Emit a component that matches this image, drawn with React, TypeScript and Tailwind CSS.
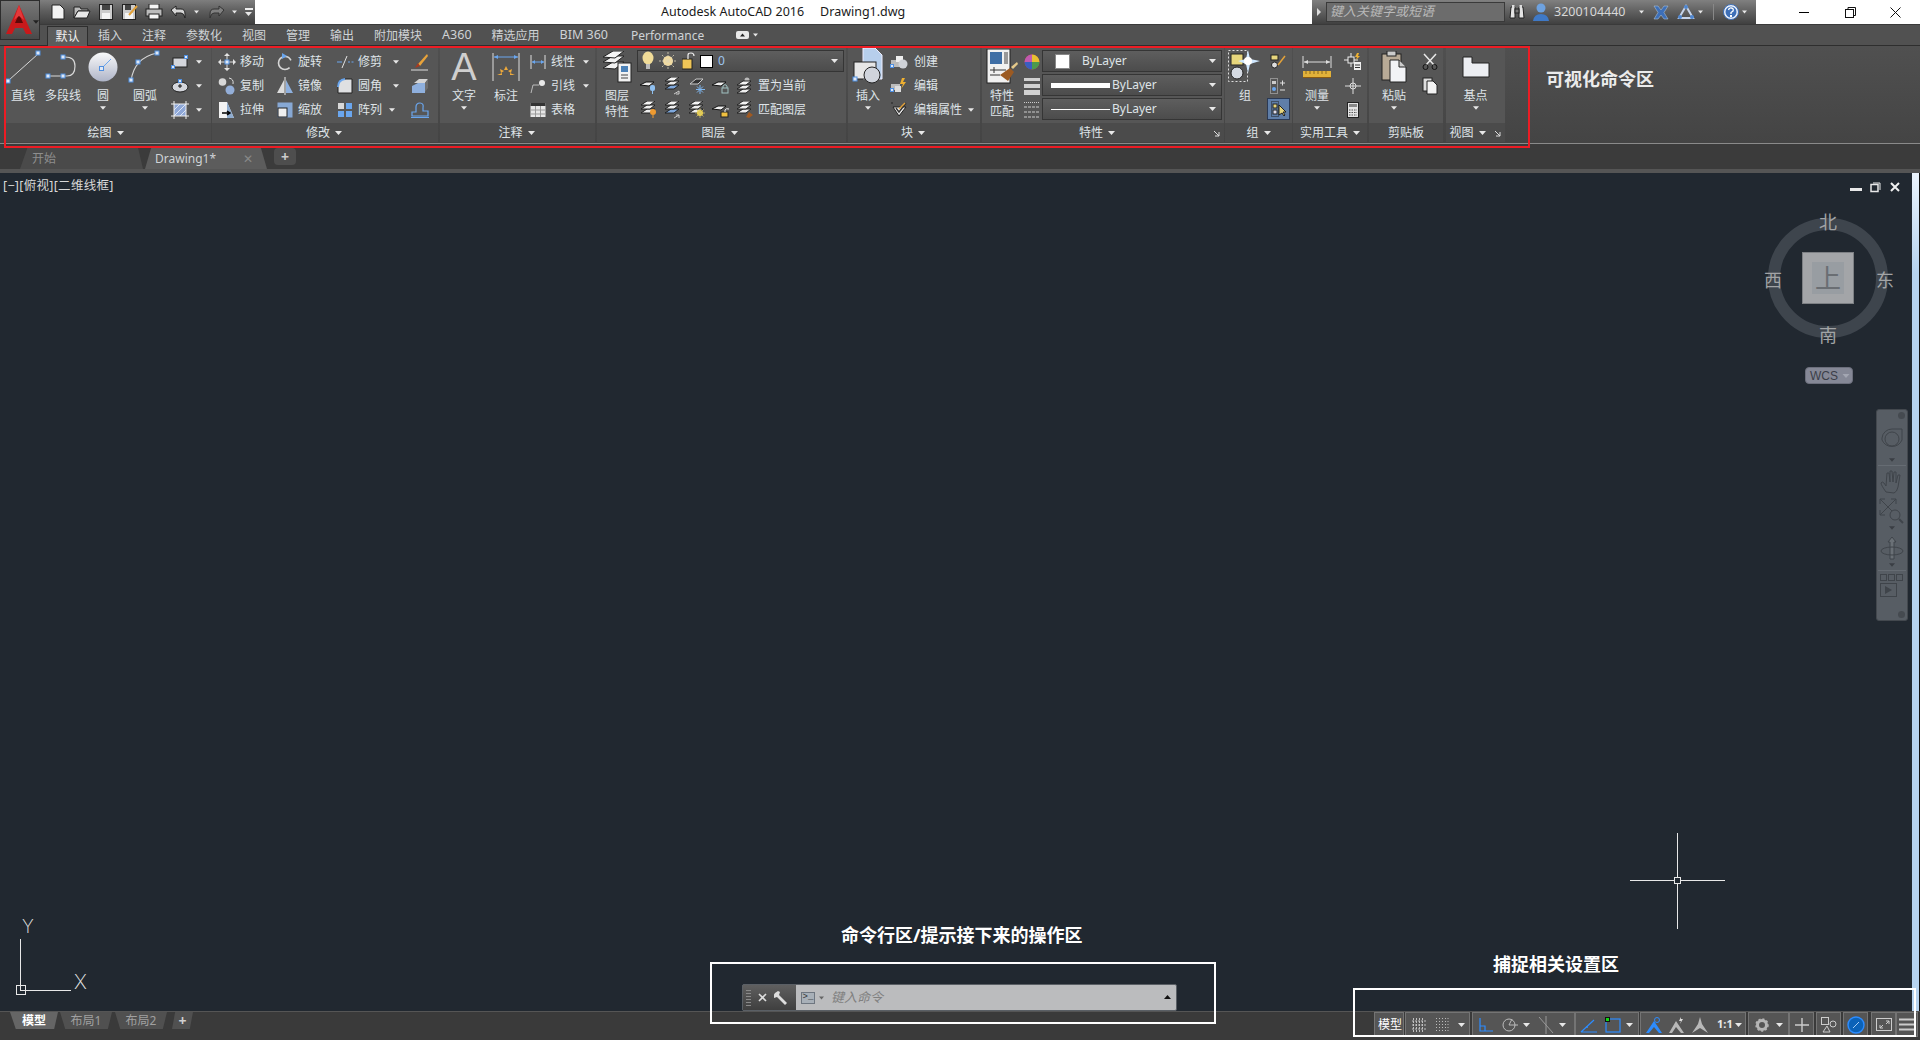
import React from "react";

const S = ({ w, h, children }: { w: number; h: number; children?: React.ReactNode }) => (
  <svg width={w} height={h} viewBox={`0 0 ${w} ${h}`} fill="none" className="shrink-0 block">{children}</svg>
);
const BL = "#6aa6ee";
const Hd = ({ x, y, s = 4 }: { x: number; y: number; s?: number }) => (
  <rect x={x - s / 2} y={y - s / 2} width={s} height={s} fill="#dfe8f5" stroke="#4f8fe0" />
);
const Caret = ({ up, c = "#e8e8e8", w = 7 }: { up?: boolean; c?: string; w?: number }) => (
  <svg width={w} height={4} viewBox="0 0 7 4" className="shrink-0 block">
    <path d={up ? "M0 4 L3.5 0 L7 4Z" : "M0 0 L7 0 L3.5 4Z"} fill={c} />
  </svg>
);

/* Draw */
const ILine = () => <S w={36} h={34}><path d="M4 30 L33 4" stroke="#d8d8d8" /><Hd x={3} y={31} /><Hd x={33} y={3} /></S>;
const IPoly = () => <S w={36} h={26}><path d="M3 22 H22 Q30 22 30 12 Q30 3 20 3" stroke="#d8d8d8" strokeWidth="1.2" /><Hd x={3} y={22} /><Hd x={18} y={22} /><Hd x={18} y={3} /></S>;
const ICircle = () => (
  <S w={30} h={30}>
    <defs><linearGradient id="cg" x1="0" y1="0" x2="0" y2="1"><stop offset="0" stopColor="#fafafa" /><stop offset="1" stopColor="#aeb4c8" /></linearGradient></defs>
    <circle cx="15" cy="15" r="14.5" fill="url(#cg)" /><path d="M14 16 L23 7" stroke={BL} /><Hd x={13.5} y={16.5} />
  </S>
);
const IArc = () => <S w={34} h={34}><path d="M3 31 Q6 8 29 3" stroke="#d8d8d8" strokeWidth="1.2" /><Hd x={3} y={30} /><Hd x={10} y={12} /><Hd x={29} y={3} /></S>;
const IRect = () => <S w={18} h={14}><rect x="2" y="3" width="14" height="9" fill="#d4d6dc" stroke="#222" /><Hd x={2} y={12} s={3} /><Hd x={15} y={2} s={3} /></S>;
const IEllipse = () => <S w={18} h={14}><ellipse cx="9" cy="8" rx="8" ry="5" fill="#d4d6dc" stroke="#222" /><path d="M7 7h4M9 5v4" stroke="#111" /><Hd x={9} y={2} s={3} /></S>;
const IHatch = () => (
  <S w={18} h={18}><rect x="3" y="3" width="12" height="12" fill="#8fa8d8" /><path d="M3 9 L9 3M3 15 L15 3M9 15 L15 9" stroke="#dce6f5" /><path d="M0 3H18M0 15H18M3 0V18M15 0V18" stroke="#f0f0f0" /></S>
);
/* Modify */
const IMove = () => <S w={18} h={18}><path d="M9 1v16M1 9h16" stroke="#ddd" /><path d="M9 0l3 3H6zM9 18l3-3H6zM0 9l3-3v6zM18 9l-3-3v6z" fill="#e4e4e4" /><Hd x={9} y={9} s={4} /></S>;
const IRotate = () => <S w={18} h={18}><circle cx="9" cy="10" r="6.5" stroke="#d6d6d6" strokeWidth="1.6" strokeDasharray="32 8" strokeDashoffset="-5" /><path d="M6 0l5 3-5 3z" fill={BL} /></S>;
const ITrim = () => <S w={18} h={14}><path d="M1 7h5M12 7h2M15.5 7h2" stroke={BL} /><path d="M6 13L11 1" stroke="#e4e4e4" /></S>;
const ICopy = () => <S w={18} h={18}><circle cx="4.5" cy="5" r="3.8" fill="#d8d8d8" /><circle cx="12" cy="13" r="4.5" fill="#93aed8" /><path d="M11 1q5 1 4 6" stroke="#ddd" /></S>;
const IMirror = () => <S w={18} h={18}><path d="M8 3L1 16h7z" fill="#dcdcdc" /><path d="M10 3l7 13h-7z" fill="#8eb0de" /><path d="M9 0v18" stroke="#eee" /></S>;
const IFillet = () => <S w={16} h={16}><path d="M1 15V7Q1 1 9 1h6v14z" fill="#dfe0e2" stroke="#222" /><path d="M1 9Q1 2 8 1" stroke={BL} strokeWidth="2" /></S>;
const IStretch = () => <S w={18} h={18}><path d="M1 1h8l7 16H1z" fill="#f2f2f2" /><path d="M9 1l7 16H9z" fill="#8faccf" /><path d="M4 12h8m-3-2l3 2-3 2" stroke="#000" strokeWidth="1.5" /></S>;
const IScale = () => <S w={16} h={16}><rect x="0.5" y="0.5" width="15" height="15" fill="#87a8d4" /><rect x="1" y="6" width="9" height="9" fill="#efefef" stroke="#222" /></S>;
const IArray = () => <S w={16} h={16}><rect x="1" y="1" width="6" height="6" fill="#d8d8d8" /><rect x="9" y="1" width="6" height="6" fill={BL} /><rect x="1" y="9" width="6" height="6" fill={BL} /><rect x="9" y="9" width="6" height="6" fill={BL} /></S>;
const IBrush = () => <S w={18} h={18}><path d="M16 1L7 11l2 2L17 3z" fill="#e8a33a" /><path d="M7 10l-3 5 5-2z" fill="#a83a20" /><path d="M0 17h17" stroke="#ddd" /></S>;
const ISolid = () => <S w={18} h={16}><path d="M1 8l6-3v10H1zM7 5h7v10H7z" fill="#8fb0de" /><path d="M3 5l5-4h9l-3 4z" fill="#d4d4d4" /><path d="M14 5l3-4v9l-3 4z" fill="#6e6e6e" /></S>;
const IOffset = () => <S w={18} h={16}><path d="M1 14v-4h4V5q0-4 4-4t3 5v3h5v5z" stroke={BL} strokeWidth="1.2" /><path d="M0 15.5h18" stroke={BL} /></S>;
/* Annotate */
const IDim = () => (
  <S w={28} h={30}><path d="M1 1v28M27 1v28" stroke="#ddd" /><path d="M2 5h24" stroke={BL} /><path d="M2 5l4-2v4zM26 5l-4-2v4z" fill={BL} />
    <path d="M14 14l2 4h-4zM8 17l4 2-3 2zM20 17l-4 2 3 2zM5 23h5v-2zM23 23h-5v-2z" fill="#eda93b" /></S>
);
const ILinear = () => <S w={16} h={14}><path d="M1 0v14M15 0v14" stroke="#ddd" /><path d="M2 7h12" stroke={BL} /><path d="M2 7l3-2v4zM14 7l-3-2v4z" fill={BL} /></S>;
const ILeader = () => <S w={16} h={16}><path d="M1 15L3 7h6" stroke="#bbb" /><circle cx="12" cy="5" r="3" fill="#e8e8e8" /></S>;
const ITable = () => <S w={16} h={16}><rect x="0.5" y="1" width="15" height="14" fill="#e6e6e6" /><rect x="0.5" y="1" width="15" height="3" fill="#333" /><path d="M1 8h14M1 12h14M5.5 4v11M10.5 4v11" stroke="#999" /></S>;
/* Layers */
const ILayerP = () => (
  <S w={30} h={32}><path d="M1 17l10-6h11l-9 7z" fill="#f1f1f1" stroke="#222" /><path d="M1 11L11 5h11l-9 7z" fill="#f1f1f1" stroke="#222" /><path d="M1 6L11 0h11l-9 7z" fill="#f6f6f6" stroke="#222" />
    <rect x="16" y="12" width="13" height="19" fill="#f2f2f2" stroke="#222" /><rect x="19" y="15" width="7" height="6" fill="#4c82b8" /><path d="M19 24h7M19 27h7" stroke="#444" /></S>
);
const Stack = ({ base = "#eee" }: { base?: string }) => (
  <g><path d="M2 12l6-4h8l-5 4z" fill={base} stroke="#222" /><path d="M2 8l6-4h8l-5 4z" fill="#eee" stroke="#222" /><path d="M2 4l6-4h8l-5 4z" fill="#f4f4f4" stroke="#222" /></g>
);
const Sheet = () => <path d="M1 8l6-3h8l-5 4z" fill="#eee" stroke="#111" />;
const LA = () => <S w={20} h={18}><Sheet /><rect x="11" y="8" width="5" height="6" rx="2" fill="#8fc0f0" /><path d="M13.5 14v3" stroke="#8fc0f0" /></S>;
const LB = () => <S w={20} h={18}><Stack base="#7fa8dc" /><path d="M11 17l5-3M16 14v3h-3" stroke="#ccc" /></S>;
const LC = () => <S w={20} h={18}><path d="M3 7l6-5h7l-5 5z" fill="#333" stroke="#ccc" /><path d="M13 8v9M9 12.5h9M10 9.5l6 6M16 9.5l-6 6" stroke="#7fb6ee" /></S>;
const LD = () => <S w={20} h={18}><Sheet /><rect x="11" y="11" width="6" height="5" fill="none" stroke="#9fc0c0" /><path d="M12 11V9q2-3 4 0v2" stroke="#9fc0c0" /></S>;
const LE = () => <S w={20} h={18}><circle cx="12" cy="3" r="2.5" fill="#bbb" /><g transform="translate(0 4)"><Stack /></g></S>;
const LF = () => <S w={20} h={18}><Stack /><circle cx="14" cy="11" r="3" fill="#ee9a30" /><path d="M14 14v3" stroke="#ee9a30" /></S>;
const LG = () => <S w={20} h={18}><Stack base="#7fa8dc" /><path d="M11 17l5-3M16 14h-3M16 14v3" stroke="#ccc" /></S>;
const LH = () => <S w={20} h={18}><Stack /><circle cx="13" cy="12" r="3" fill="#efd040" /><path d="M13 7v10M8 12h10M9.5 8.5l7 7M16.5 8.5l-7 7" stroke="#d8c870" strokeWidth=".7" /></S>;
const LI = () => <S w={20} h={18}><Sheet /><rect x="10" y="11" width="7" height="5" fill="#efc040" stroke="#222" /><path d="M14 11V9q1-2 4-1" stroke="#eee" /></S>;
const LJ = () => <S w={20} h={18}><Stack /><path d="M11 16l3-5 4 3-4 3z" fill="#a05a22" /></S>;
const IBulb = () => <S w={12} h={20}><ellipse cx="6" cy="7" rx="5.5" ry="6.5" fill="#f1dc98" /><rect x="4" y="13" width="4" height="5" fill="#bbb" /></S>;
const ISun = () => <S w={20} h={20}><circle cx="10" cy="10" r="5" fill="#f3dca0" /><path d="M10 1v18M1 10h18M4 4l12 12M16 4L4 16" stroke="#dcd4b8" strokeWidth=".8" strokeDasharray="2 1" /></S>;
const ILock = () => <S w={14} h={18}><rect x="0" y="7" width="10" height="10" fill="#efc557" stroke="#222" /><path d="M6 7V3q0-2 3-2t3 3" stroke="#eee" strokeWidth="1.2" /></S>;
/* Block */
const IInsert = () => (
  <S w={32} h={40}><path d="M11 1h12l7 7v24H11z" fill="#b7cfec" stroke="#eef" /><rect x="2" y="15" width="22" height="17" fill="#e6e6e6" stroke="#222" /><circle cx="20" cy="28" r="8" fill="#d0d4dc" stroke="#222" /><Hd x={3} y={32} /></S>
);
const ICreate = () => <S w={18} h={14}><rect x="1" y="5" width="9" height="7" fill="#bbb" /><rect x="6" y="1" width="7" height="6" fill="#eee" /><circle cx="13" cy="9" r="4.5" fill="#cfd2d8" /><Hd x={2} y={11} s={3} /></S>;
const IEdit = () => <S w={18} h={16}><rect x="1" y="6" width="9" height="6" fill="#bbb" /><rect x="5" y="8" width="6" height="6" fill="#ddd" /><path d="M12 0l-2 6h3l-2 5 5-7h-3l2-4z" fill="#eeb030" /><Hd x={2} y={12} s={3} /></S>;
const IEditAttr = () => <S w={18} h={16}><path d="M1 1h2M3 5l6 9 7-9z" fill="#e8e8e8" stroke="#222" /><path d="M6 6l3 4 7-9" stroke="#333" strokeWidth="1.4" /><path d="M9 7l6-6" stroke="#e3a23a" strokeWidth="1.4" /></S>;
/* Properties */
const IMatch = () => (
  <S w={32} h={36}><rect x="1" y="0" width="23" height="34" fill="#f1f1f1" stroke="#222" /><rect x="4" y="3" width="12" height="12" fill="#3e6ea5" /><rect x="18" y="3" width="4" height="12" fill="#999" /><path d="M4 21h16M4 26h10M8 18v6" stroke="#333" /><path d="M14 26l10-7 4 4-6 9z" fill="#9c5a22" /><path d="M25 18l6-5 1 2-5 5z" fill="#e5c98a" /></S>
);
const IColor = () => <S w={16} h={16}><circle cx="8" cy="8" r="7.5" fill="#c44" /><path d="M8 8L8 .5A7.5 7.5 0 0 1 15.5 8z" fill="#e8c030" /><path d="M8 8h7.5A7.5 7.5 0 0 1 8 15.5z" fill="#4c9a4c" /><path d="M8 8v7.5A7.5 7.5 0 0 1 .5 8z" fill="#3a5ec0" /><path d="M8 8H.5A7.5 7.5 0 0 1 8 .5z" fill="#c05ab0" /></S>;
const ILW = () => <S w={16} h={18}><rect y="1" width="16" height="3" fill="#d0d0d0" /><rect y="7" width="16" height="4" fill="#d0d0d0" /><rect y="13" width="16" height="5" fill="#d0d0d0" /></S>;
const ILT = () => <S w={16} h={18}><path d="M0 1.5h16" stroke="#ccc" strokeDasharray="1 1" /><path d="M0 6h16M0 11h16M0 16h16" stroke="#ccc" strokeDasharray="3 1" /></S>;
/* Group */
const IGroup = () => (
  <S w={34} h={34}><rect x=".5" y=".5" width="19" height="31" stroke="#ddd" strokeDasharray="2 2" /><rect x="3" y="4" width="12" height="11" fill="#e7d67c" stroke="#222" /><circle cx="9" cy="23" r="6" fill="#d5dae2" stroke="#222" />
    <path d="M20 0l2 9 10 2-10 3-2 9-2-9-8-3 8-2z" fill="#cfe8ff" /><circle cx="20" cy="11" r="4" fill="#fff" /></S>
);
const IG1 = () => <S w={16} h={16}><rect x="1" y="1" width="7" height="5" fill="#e7d67c" stroke="#222" /><circle cx="4.5" cy="11" r="3" fill="#ddd" stroke="#222" /><path d="M8 11l7-9" stroke="#e3a23a" strokeWidth="1.5" /></S>;
const IG2 = () => <S w={16} h={16}><rect x=".5" y=".5" width="7" height="15" stroke="#ccc" strokeDasharray="1 1" /><rect x="2" y="3" width="4" height="3" fill="#ccc" /><circle cx="4" cy="11" r="2" fill={BL} /><path d="M10 5h5M12.5 2.5v5M10 12h5" stroke="#ddd" /></S>;
const IG3 = () => <S w={16} h={16}><rect x=".5" y=".5" width="7" height="15" stroke="#222" strokeDasharray="1 1" /><rect x="2" y="3" width="4" height="4" fill="#e7d67c" stroke="#222" /><rect x="2" y="9" width="4" height="4" fill="#dde" stroke="#222" /><path d="M8 4v10l3-2 2 3 1-1-2-3h3z" fill="#e7d67c" stroke="#222" /></S>;
/* Util */
const IRuler = () => <S w={30} h={24}><path d="M1 1v12M29 1v12" stroke="#ddd" /><path d="M2 7h26" stroke="#ddd" /><path d="M2 7l4-2v4zM28 7l-4-2v4z" fill="#ddd" /><rect x="1" y="16" width="28" height="6" fill="#e2b23a" /><path d="M1 22.5h28" stroke="#8a5a10" /><path d="M4 16v3M8 16v3M12 16v3M16 16v3M20 16v3M24 16v3" stroke="#8a6a20" /></S>;
const IId = () => <S w={18} h={18}><path d="M0 7h14M7 0v14" stroke="#eee" /><rect x="4" y="4" width="6" height="6" fill="#4a4a4a" stroke="#eee" /><path d="M13 0l-2 4h2l-1 3 4-4h-2l1-3z" fill="#eeb030" /><rect x="10" y="9" width="7" height="8" fill="#eee" /><path d="M11 12h5M11 14.5h5" stroke="#333" /></S>;
const ICross = () => <S w={18} h={18}><path d="M9 1v16M1 9h16" stroke="#ddd" /><circle cx="9" cy="9" r="3" stroke="#ddd" /></S>;
const ICalc = () => <S w={12} h={16}><rect x=".5" y=".5" width="11" height="15" fill="#e4e4e4" stroke="#222" /><rect x="2" y="2" width="8" height="3" fill="#888" /><path d="M2 8h8M2 10.5h8M2 13h8" stroke="#555" strokeDasharray="1.5 1" /></S>;
/* Clipboard */
const IPaste = () => (
  <S w={26} h={32}><rect x="1" y="3" width="19" height="26" fill="#b8aa96" stroke="#222" /><rect x="6" y="0" width="9" height="5" fill="#ccc" stroke="#222" /><path d="M9 9h9l7 7v15H9z" fill="#f2f3f6" stroke="#222" /><path d="M18 9v7h7" fill="#ccc" stroke="#222" /></S>
);
const IScissors = () => <S w={16} h={18}><path d="M2 1l10 11M14 1L4 12" stroke="#e8e8e8" strokeWidth="1.5" /><circle cx="3.5" cy="14" r="2.5" stroke="#111" /><circle cx="12.5" cy="14" r="2.5" stroke="#111" /></S>;
const ICopyS = () => <S w={16} h={18}><rect x="1" y="1" width="9" height="13" fill="#ddd" stroke="#222" /><path d="M5 4h6l4 4v9H5z" fill="#f2f2f2" stroke="#222" /></S>;
const IBase = () => <S w={28} h={22}><path d="M1 1h9v6h17v14H1z" fill="#eceef2" stroke="#222" /></S>;

/* pieces */
const Big = ({ w, label, label2, caret, children }: { w: string; label: string; label2?: string; caret?: boolean; children?: React.ReactNode }) => (
  <div className={`${w} shrink-0 flex flex-col items-center pt-px`}>
    <div className="h-[38px] flex items-center justify-center">{children}</div>
    <div className="mt-[2px] h-[16px] leading-[16px] text-[12px]">{label}</div>
    {label2 && <div className="h-[16px] leading-[16px] text-[12px]">{label2}</div>}
    {caret && <div className="mt-[2px]"><Caret w={6} /></div>}
  </div>
);
const Row = ({ icon, text, caret, box = "w-[22px]", ml = "ml-[2px]", cm = "ml-[11px]" }: { icon?: React.ReactNode; text?: string; caret?: boolean; box?: string; ml?: string; cm?: string }) => (
  <div className="h-[24px] flex items-center">
    <div className={`${box} shrink-0 flex justify-center`}>{icon}</div>
    {text && <span className={`${ml} text-[12px] leading-[16px] whitespace-nowrap`}>{text}</span>}
    {caret && <div className={cm}><Caret w={6} /></div>}
  </div>
);
const Col = ({ w, children }: { w: string; children?: React.ReactNode }) => <div className={`${w} shrink-0 pt-[3px] flex flex-col`}>{children}</div>;
const Launch = () => <svg width="7" height="7" viewBox="0 0 7 7" className="absolute right-[4px] top-[7px]"><path d="M1 1l5 5M6 2v4H2" stroke="#ddd" fill="none" /></svg>;
const Panel = ({ cls, title, noCaret, launch, foot = "", children }: { cls: string; title: string; noCaret?: boolean; launch?: boolean; foot?: string; children?: React.ReactNode }) => (
  <div className={`${cls} shrink-0 h-[95px] flex flex-col bg-[#565656]`}>
    <div className="h-[76px] flex overflow-hidden">{children}</div>
    <div className={`${foot} h-[19px] relative bg-[#4b4b4b] flex items-center justify-center gap-[5px] pt-px text-[12px] leading-[16px]`}>
      <span>{title}</span>{!noCaret && <Caret w={7} />}{launch && <Launch />}
    </div>
  </div>
);
const Combo = ({ children, mt = "" }: { children?: React.ReactNode; mt?: string }) => (
  <div className={`h-[22px] ${mt} relative flex items-center border border-[#353535] bg-[linear-gradient(#5e5e5e,#4c4c4c)] text-[12px] pr-[20px]`}>
    {children}
    <div className="absolute right-[5px] top-[8px]"><Caret w={7} /></div>
  </div>
);
const Tab = ({ t, cls = "text-[12px]" }: { t: string; cls?: string }) => (
  <div className={`${cls} px-[10px] pt-px flex items-center text-[#cfd3d6] whitespace-nowrap`}>{t}</div>
);
const Cell = ({ cls, children }: { cls: string; children?: React.ReactNode }) => (
  <div className={`${cls} h-[25px] shrink-0 flex items-center border border-[#747474] bg-[#555]`}>{children}</div>
);

export default function App() {
  return (
    <div className="relative w-[1920px] h-[1040px] overflow-hidden flex flex-col bg-[#3b3b3b] text-[#dfe4e8] font-['Noto_Sans','Noto_Sans_CJK_SC',sans-serif]">
      {/* Title bar */}
      <div className="h-[24px] shrink-0 flex bg-white">
        <div className="w-[255px] pl-[46px] flex items-center bg-[linear-gradient(#7e7e7e,#5e5e5e_45%,#404040)]">
          <div className="w-[24px] flex justify-center"><S w={16} h={16}><path d="M2 1h8l4 4v10H2z" fill="#f2f2f2" stroke="#222" /></S></div>
          <div className="w-[24px] flex justify-center"><S w={18} h={14}><path d="M1 2h6l1 2h7v2H5l-4 7z" fill="#bbb" stroke="#222" /><path d="M5 6h12l-3 7H1z" fill="#e8e8e8" stroke="#222" /></S></div>
          <div className="w-[24px] flex justify-center"><S w={14} h={16}><rect x=".5" y=".5" width="13" height="15" fill="#ccc" stroke="#222" /><rect x="3" y="1" width="8" height="5" fill="#444" /><rect x="3" y="9" width="8" height="6" fill="#f4f4f4" /></S></div>
          <div className="w-[24px] flex justify-center"><S w={16} h={16}><rect x=".5" y=".5" width="13" height="15" fill="#ccc" stroke="#222" /><rect x="3" y="1" width="6" height="5" fill="#444" /><rect x="3" y="9" width="8" height="6" fill="#f4f4f4" /><path d="M7 11L15 2" stroke="#e3a23a" strokeWidth="2" /></S></div>
          <div className="w-[24px] flex justify-center"><S w={18} h={16}><rect x="4" y="0" width="10" height="6" fill="#f4f4f4" stroke="#222" /><rect x="1" y="5" width="16" height="7" fill="#bbb" stroke="#222" /><rect x="4" y="10" width="10" height="5" fill="#f4f4f4" stroke="#222" /></S></div>
          <div className="w-[24px] flex justify-center"><S w={16} h={14}><path d="M1 5l5-4v3h5q4 0 4 5v4q-1-5-4-5H6v3z" fill="#d6d6d6" stroke="#222" /></S></div>
          <div className="w-[12px] flex justify-center"><Caret w={5} /></div>
          <div className="w-[24px] ml-[3px] flex justify-center"><S w={16} h={14}><path d="M15 5l-5-4v3H5Q1 4 1 9v4q1-5 4-5h5v3z" fill="#808080" stroke="#333" /></S></div>
          <div className="w-[12px] ml-[-1px] flex justify-center"><Caret w={5} /></div>
          <div className="ml-[5px] flex flex-col gap-[2px]"><div className="w-[8px] h-[2px] bg-[#eee]" /><Caret w={7} /></div>
        </div>
        <div className="w-[1057px] pl-[406px] flex items-center text-[12.5px] text-[#1a1a1a] whitespace-nowrap">
          <span>Autodesk AutoCAD 2016</span><span className="ml-[16px]">Drawing1.dwg</span>
        </div>
        <div className="w-[444px] flex items-center bg-[linear-gradient(#808080,#626262_45%,#404040)] text-[#d8d8d8]">
          <div className="w-[14px] flex justify-center"><svg width="4" height="8" viewBox="0 0 4 8"><path d="M0 0l4 4-4 4z" fill="#ddd" /></svg></div>
          <div className="w-[179px] h-[20px] border border-[#3a3a3a] bg-[#6c6c6c] flex items-center pl-[3px] text-[13px] italic text-[#b8b8b8]">键入关键字或短语</div>
          <div className="ml-[4px] w-[18px]"><S w={16} h={16}><path d="M2 3h4v11H1zM10 3h4l1 11h-5z" fill="#e4e4e4" stroke="#222" /><rect x="3" y="1" width="2.5" height="3" fill="#ddd" /><rect x="10.5" y="1" width="2.5" height="3" fill="#ddd" /><rect x="6" y="5" width="4" height="4" fill="#777" stroke="#222" /></S></div>
          <div className="ml-[4px] w-[20px] flex justify-center"><S w={16} h={18}><circle cx="8" cy="5" r="4.5" fill="#6ea2e0" /><path d="M0 18q1-7 8-7t8 7z" fill="#3f79c6" /></S></div>
          <span className="ml-[3px] text-[12.5px]">3200104440</span>
          <div className="ml-[13px]"><Caret w={5} /></div>
          <div className="ml-[9px] w-[16px]"><S w={16} h={15}><path d="M1 1h4l3 4 3-4h4l-4 6.5 4 6.5h-4l-3-4-3 4H1l4-6.5z" fill="#3d6fb8" stroke="#bcd" strokeWidth=".5" /></S></div>
          <div className="ml-[8px] w-[18px]"><S w={18} h={16}><path d="M9 2L2 14h14z" stroke="#c6d4ea" strokeWidth="2" /><circle cx="9" cy="3" r="2" fill="#4f86cf" /><circle cx="3" cy="13" r="2" fill="#4f86cf" /><circle cx="15" cy="13" r="2" fill="#4f86cf" /></S></div>
          <div className="ml-[3px]"><Caret w={5} /></div>
          <div className="ml-[10px] w-px h-[16px] bg-[#888]" />
          <div className="ml-[9px] w-[16px]"><S w={16} h={16}><circle cx="8" cy="8" r="7.5" fill="#eaf0fa" stroke="#3d6fb8" /><circle cx="8" cy="8" r="5.5" fill="#3d6fb8" /><rect x="7" y="11" width="2" height="2" fill="#fff" /><path d="M5.5 6Q6 3.5 8.5 4t1.5 3L8 8.5V10" stroke="#fff" fill="none" strokeWidth="1.3" /></S></div>
          <div className="ml-[3px]"><Caret w={5} /></div>
        </div>
        <div className="flex-1 flex items-center">
          <div className="w-[48px] ml-[24px] flex justify-center"><div className="w-[10px] h-[1px] bg-black" /></div>
          <div className="w-[44px] flex justify-center"><S w={11} h={11}><rect x=".5" y="2.5" width="8" height="8" stroke="#111" /><path d="M3 2.5V.5h7.5v8H8.5" stroke="#111" /></S></div>
          <div className="w-[46px] flex justify-center"><S w={11} h={11}><path d="M.5.5l10 10M10.5.5l-10 10" stroke="#111" /></S></div>
        </div>
      </div>

      {/* App logo */}
      <div className="absolute left-0 top-0 w-[40px] h-[40px] z-20 border border-[#2d2d2d] bg-[linear-gradient(#777,#4a4a4a)] flex items-start pl-[5px] pt-[4px]">
        <S w={26} h={29}><path d="M13 0L0 29h6l3-6h8l3 6h6z" fill="#c9191b" /><path d="M13 9l-4 9h8z" fill="#5d0808" /><path d="M13 0l-5 15 5-4 5 4z" fill="#e4383a" /></S>
        <div className="ml-[1px] mt-[15px]"><Caret w={6} c="#222" /></div>
      </div>

      {/* Ribbon tabs */}
      <div className="h-[22px] shrink-0 flex pl-[47px] bg-[#515151] border-t border-[#3a3a3a] border-b border-b-[#2e2e2e]">
        <div className="w-[41px] h-[21px] mt-px flex items-center justify-center text-[12px] text-[#f0f0f0] bg-[#5c5c5c] border border-b-0 border-[#2e2e2e]">默认</div>
        {["插入", "注释", "参数化", "视图", "管理", "输出", "附加模块"].map((t) => <Tab key={t} t={t} />)}
        <Tab t="A360" cls="text-[12.5px]" />
        <Tab t="精选应用" />
        <Tab t="BIM 360" cls="text-[12.5px] mr-[3px]" />
        <Tab t="Performance" />
        <div className="ml-[22px] flex items-center gap-[4px]"><div className="w-[13px] h-[8px] rounded-[2px] bg-[#e8e8e8] flex items-center justify-center"><Caret up w={5} c="#222" /></div><Caret w={5} /></div>
      </div>

      {/* Ribbon */}
      <div className="h-[98px] shrink-0 flex pl-[6px] pt-px bg-[linear-gradient(#505050,#444)] border-b border-[#8a8a8a]">
        <Panel cls="w-[205px]" title="绘图" foot="pr-[6px]">
          <Big w="w-[34px]" label="直线"><ILine /></Big>
          <Big w="w-[46px]" label="多段线"><IPoly /></Big>
          <Big w="w-[34px]" label="圆" caret><ICircle /></Big>
          <Big w="w-[50px]" label="圆弧" caret><IArc /></Big>
          <Col w="w-[40px]">
            <Row box="w-[20px]" icon={<IRect />} caret cm="ml-[6px]" />
            <Row box="w-[20px]" icon={<IEllipse />} caret cm="ml-[6px]" />
            <Row box="w-[20px]" icon={<IHatch />} caret cm="ml-[6px]" />
          </Col>
        </Panel>
        <Panel cls="w-[226px] ml-px" title="修改" foot="pr-[2px]">
          <div className="w-[4px]" />
          <Col w="w-[58px]"><Row icon={<IMove />} text="移动" /><Row icon={<ICopy />} text="复制" /><Row icon={<IStretch />} text="拉伸" /></Col>
          <Col w="w-[60px]"><Row icon={<IRotate />} text="旋转" /><Row icon={<IMirror />} text="镜像" /><Row icon={<IScale />} text="缩放" /></Col>
          <Col w="w-[75px]"><Row icon={<ITrim />} text="修剪" caret /><Row icon={<IFillet />} text="圆角" caret /><Row icon={<IArray />} text="阵列" caret cm="ml-[7px]" /></Col>
          <Col w="w-[22px]"><Row icon={<IBrush />} /><Row icon={<ISolid />} /><Row icon={<IOffset />} /></Col>
        </Panel>
        <Panel cls="w-[155px] ml-[2px]" title="注释" foot="pr-[2px]">
          <Big w="w-[48px]" label="文字" caret><span className="text-[38px] leading-[38px] font-['Liberation_Sans',sans-serif] text-[#cfcfcf]">A</span></Big>
          <Big w="w-[36px]" label="标注"><IDim /></Big>
          <div className="w-[3px]" />
          <Col w="w-[68px]"><Row icon={<ILinear />} text="线性" caret cm="ml-[8px]" /><Row icon={<ILeader />} text="引线" caret cm="ml-[8px]" /><Row icon={<ITable />} text="表格" /></Col>
        </Panel>
        <Panel cls="w-[249px] ml-[2px]" title="图层" foot="pr-[4px]">
          <Big w="w-[40px]" label="图层" label2="特性"><ILayerP /></Big>
          <div className="w-[207px] pt-[3px] flex flex-col">
            <Combo>
              <div className="flex items-center gap-[4px] pl-[4px]"><IBulb /><ISun /><ILock /><div className="w-[13px] h-[13px] bg-white border border-black" /><span className="text-[#9cc4ee] ml-[1px]">0</span></div>
            </Combo>
            <div className="mt-[2px] h-[24px] flex items-center">
              <div className="w-[24px] flex justify-center"><LA /></div>
              <div className="w-[24px] flex justify-center"><LB /></div>
              <div className="w-[24px] flex justify-center"><LC /></div>
              <div className="w-[24px] flex justify-center"><LD /></div>
              <div className="w-[24px] flex justify-center"><LE /></div>
              <span className="ml-px text-[12px] leading-[16px]">置为当前</span>
            </div>
            <div className="h-[24px] flex items-center">
              <div className="w-[24px] flex justify-center"><LF /></div>
              <div className="w-[24px] flex justify-center"><LG /></div>
              <div className="w-[24px] flex justify-center"><LH /></div>
              <div className="w-[24px] flex justify-center"><LI /></div>
              <div className="w-[24px] flex justify-center"><LJ /></div>
              <span className="ml-px text-[12px] leading-[16px]">匹配图层</span>
            </div>
          </div>
        </Panel>
        <Panel cls="w-[132px] ml-[2px]" title="块" foot="pr-[2px]">
          <Big w="w-[40px]" label="插入" caret><IInsert /></Big>
          <Col w="w-[90px]"><Row icon={<ICreate />} text="创建" ml="ml-[4px]" /><Row icon={<IEdit />} text="编辑" ml="ml-[4px]" /><Row icon={<IEditAttr />} text="编辑属性" ml="ml-[4px]" cm="ml-[6px]" caret /></Col>
        </Panel>
        <Panel cls="w-[242px] ml-[2px]" title="特性" launch foot="pr-[12px]">
          <Big w="w-[40px]" label="特性" label2="匹配"><IMatch /></Big>
          <div className="w-[20px] pt-[3px] flex flex-col items-center"><div className="h-[24px] flex items-center"><IColor /></div><div className="h-[24px] flex items-center"><ILW /></div><div className="h-[24px] flex items-center"><ILT /></div></div>
          <div className="w-[180px] pt-[3px] flex flex-col">
            <Combo><div className="w-[15px] h-[15px] bg-white border border-[#888] ml-[12px]" /><span className="ml-[12px]">ByLayer</span></Combo>
            <Combo mt="mt-[2px]"><div className="w-[59px] h-[5px] bg-white ml-[8px]" /><span className="ml-[2px]">ByLayer</span></Combo>
            <Combo mt="mt-[2px]"><div className="w-[59px] h-px bg-white ml-[8px]" /><span className="ml-[2px]">ByLayer</span></Combo>
          </div>
        </Panel>
        <Panel cls="w-[67px] ml-px" title="组">
          <Big w="w-[40px]" label="组"><IGroup /></Big>
          <Col w="w-[26px]">
            <Row box="w-[26px]" icon={<IG1 />} />
            <Row box="w-[26px]" icon={<IG2 />} />
            <div className="w-[23px] h-[22px] ml-[2px] flex items-center justify-center bg-[#5f7ea8] border border-[#2b3a55]"><IG3 /></div>
          </Col>
        </Panel>
        <Panel cls="w-[74px] ml-px" title="实用工具">
          <Big w="w-[48px]" label="测量" caret><IRuler /></Big>
          <Col w="w-[24px]"><Row box="w-[24px]" icon={<IId />} /><Row box="w-[24px]" icon={<ICross />} /><Row box="w-[24px]" icon={<ICalc />} /></Col>
        </Panel>
        <Panel cls="w-[74px] ml-[2px]" title="剪贴板" noCaret>
          <Big w="w-[50px]" label="粘贴" caret><IPaste /></Big>
          <Col w="w-[22px]"><Row icon={<IScissors />} /><Row icon={<ICopyS />} /></Col>
        </Panel>
        <Panel cls="w-[59px] ml-[3px]" title="视图" launch foot="pr-[16px]">
          <Big w="w-[59px]" label="基点" caret><IBase /></Big>
        </Panel>
      </div>

      {/* Document tabs */}
      <div className="h-[29px] shrink-0 flex items-start pt-[4px] border-b-[4px] border-[#555] box-border">
        <div className="ml-[20px] w-[123px] h-[21px] flex items-center pl-[12px] text-[12px] text-[#8e8e8e] bg-[#4a4a4a] [clip-path:polygon(0_100%,6%_0,96%_0,100%_100%)]">开始</div>
        <div className="ml-[2px] w-[122px] h-[21px] flex items-center pl-[10px] text-[12px] text-[#cfd3d6] bg-[#5c5c5c] [clip-path:polygon(0_100%,5%_0,95%_0,100%_100%)]">
          <span>Drawing1*</span><span className="ml-[27px] text-[#888] text-[12px]">✕</span>
        </div>
        <div className="ml-[7px] w-[22px] h-[17px] flex items-center justify-center bg-[#4e4e4e] rounded-[4px] text-[#ccc] text-[14px] font-bold leading-none">+</div>
      </div>

      {/* Viewport */}
      <div className="flex-1 flex min-h-0">
        <div className="relative flex-1 bg-[#212830]">
          <div className="absolute left-[3px] top-[5px] text-[12.5px] tracking-[0.3px] leading-[16px] text-[#d8d8d8]">[−][俯视][二维线框]</div>

          {/* viewport window buttons */}
          <div className="absolute left-[1850px] top-[15px] w-[12px] h-[3px] bg-[#e8e8e8]" />
          <div className="absolute left-[1870px] top-[9px]"><S w={11} h={11}><rect x="1" y="2.5" width="7" height="7" stroke="#e8e8e8" strokeWidth="1.5" /><path d="M3 1h7v7" stroke="#e8e8e8" /></S></div>
          <div className="absolute left-[1890px] top-[9px]"><S w={10} h={10}><path d="M1 1l8 8M9 1L1 9" stroke="#f0f0f0" strokeWidth="2" /></S></div>

          {/* ViewCube */}
          <div className="absolute left-[1763px] top-[40px] w-[130px] h-[130px]">
            <div className="absolute left-[5px] top-[5px] w-[120px] h-[120px] rounded-full border-[12px] border-[#3e454d]" />
            <div className="absolute left-[39px] top-[39px] w-[52px] h-[52px] bg-[#a3a5a8] border border-[#7d8084] flex items-center justify-center">
              <div className="w-[32px] h-[32px] bg-[#989da2] flex items-center justify-center text-[26px] leading-[32px] text-[#6a6e73]">上</div>
            </div>
            <span className="absolute left-[55px] top-[-1px] w-[20px] text-center text-[18px] leading-[20px] text-[#a2a4a6]">北</span>
            <span className="absolute left-[55px] top-[112px] w-[20px] text-center text-[18px] leading-[20px] text-[#a2a4a6]">南</span>
            <span className="absolute left-[0px] top-[57px] w-[20px] text-center text-[18px] leading-[20px] text-[#a2a4a6]">西</span>
            <span className="absolute left-[112px] top-[57px] w-[20px] text-center text-[18px] leading-[20px] text-[#a2a4a6]">东</span>
          </div>
          <div className="absolute left-[1805px] top-[194px] w-[48px] h-[17px] rounded-[4px] bg-[#858896] border border-[#6c6f7c] flex items-center pl-[4px] gap-[4px] text-[12px] leading-none text-[#3b3e48] font-['Liberation_Sans',sans-serif]">
            <span>WCS</span><Caret w={8} c="#a3a6b2" />
          </div>

          {/* Navigation bar */}
          <div className="absolute left-[1876px] top-[236px] w-[32px] h-[212px] rounded-[3px] bg-[#575d64] border border-[#43484e] flex flex-col items-center pt-[18px]">
            <div className="absolute right-[2px] top-[2px] w-[7px] h-[7px] rounded-full bg-[#454a50]" />
            <div className="absolute right-[2px] bottom-[2px] w-[7px] h-[7px] rounded-full bg-[#454a50]" />
            <S w={24} h={24}><path d="M2 10a10 10 0 0 1 10-9h10v11a11 11 0 0 1-20 0z" stroke="#3f444a" /><circle cx="12" cy="11" r="7" stroke="#3f444a" /></S>
            <div className="mt-[6px]"><Caret w={6} c="#3a3e44" /></div>
            <div className="w-[28px] h-px bg-[#666c73] mt-[3px]" />
            <div className="mt-[4px]"><S w={24} h={24}><path d="M6 22Q1 15 1 13q1-2 3 0l2 3 1-13h2l1 9V1h2l1 11 1-10h2l0 11 2-8h2l-2 12q-1 5-4 6z" stroke="#3f444a" /></S></div>
            <div className="mt-[4px]"><S w={26} h={26}><path d="M1 1l16 16M17 1L1 17M1 1h5M1 1v5M17 1h-5M17 1v5M1 17h5M1 17v-5" stroke="#3f444a" /><circle cx="16" cy="17" r="5" fill="#575d64" stroke="#3f444a" /><path d="M20 21l4 4" stroke="#3f444a" strokeWidth="2" /></S></div>
            <div className="mt-[2px]"><Caret w={6} c="#3a3e44" /></div>
            <div className="mt-[6px]"><S w={24} h={24}><path d="M12 1l4 5h-2v17h-4V6H8z" fill="#6a7076" stroke="#3f444a" /><ellipse cx="12" cy="15" rx="11" ry="4" stroke="#3f444a" /></S></div>
            <div className="mt-[3px]"><Caret w={6} c="#3a3e44" /></div>
            <div className="w-[28px] h-px bg-[#666c73] mt-[3px]" />
            <div className="mt-[3px]"><S w={24} h={24}><rect x=".5" y=".5" width="6" height="6" stroke="#3f444a" /><rect x="8.5" y=".5" width="6" height="6" stroke="#3f444a" /><rect x="16.5" y=".5" width="6" height="6" stroke="#3f444a" /><rect x=".5" y="9.5" width="16" height="13" stroke="#3f444a" /><path d="M5 12l7 4-7 4z" fill="#3f444a" /></S></div>
          </div>

          {/* UCS icon */}
          <div className="absolute left-[20px] top-[766px] w-px h-[52px] bg-[#e8e8e8]" />
          <div className="absolute left-[20px] top-[817px] w-[51px] h-px bg-[#e8e8e8]" />
          <div className="absolute left-[16px] top-[812px] w-[10px] h-[10px] border border-[#e8e8e8]" />
          <span className="absolute left-[22px] top-[745px] text-[18px] leading-[18px] font-extralight text-[#e8e8e8] font-['Inter',sans-serif]">Y</span>
          <span className="absolute left-[74px] top-[800px] text-[20px] leading-[18px] font-extralight text-[#e8e8e8] font-['Inter',sans-serif]">X</span>

          {/* Crosshair */}
          <div className="absolute left-[1630px] top-[707px] w-[95px] h-px bg-[#e8e8e8]" />
          <div className="absolute left-[1677px] top-[660px] w-px h-[96px] bg-[#e8e8e8]" />
          <div className="absolute left-[1674px] top-[704px] w-[7px] h-[7px] border border-[#e8e8e8] bg-[#212830]" />
        </div>
        <div className="w-[8px] shrink-0 bg-[linear-gradient(#eaf3fc,#b6d3f0_12%,#b6d3f0)] border-r border-[#111]" />
      </div>

      {/* Bottom bar */}
      <div className="h-[29px] shrink-0 flex bg-[#3a3a3a] border-t border-[#555] box-border">
        <div className="ml-[10px] w-[48px] h-[17px] flex items-center justify-center text-[12px] leading-none text-white font-semibold bg-[#656565] [clip-path:polygon(0_0,100%_0,92%_100%,12%_100%)]">模型</div>
        <div className="ml-[2px] w-[52px] h-[17px] flex items-center justify-center text-[12px] leading-none text-[#a0a0a0] bg-[#505050] [clip-path:polygon(0_0,100%_0,92%_100%,10%_100%)]">布局1</div>
        <div className="ml-[3px] w-[52px] h-[17px] flex items-center justify-center text-[12px] leading-none text-[#a0a0a0] bg-[#505050] [clip-path:polygon(0_0,100%_0,92%_100%,10%_100%)]">布局2</div>
        <div className="ml-[5px] w-[21px] h-[17px] flex items-center justify-center text-[14px] font-bold leading-none text-[#d0d0d0] bg-[#505050] [clip-path:polygon(15%_0,100%_0,85%_100%,0_100%)]">+</div>

        <div className="ml-[1181px] flex items-start">
          <Cell cls="w-[30px] pl-[2px] justify-center text-[12px] text-white">模型</Cell>
          <Cell cls="w-[65px] ml-px pl-[6px]">
            <S w={14} h={14}><path d="M1.5 0v14M4.5 0v14M7.5 0v14M10.5 0v14M0 3h14M0 7h14M0 11h14" stroke="#c0c0c0" strokeDasharray="2 1" /></S>
            <div className="ml-[9px]"><S w={14} h={14}><path d="M1.5 0v14M4.5 0v14M7.5 0v14M10.5 0v14M13 0v14" stroke="#bbb" strokeDasharray="1 2" /></S></div>
            <div className="ml-[9px]"><Caret w={7} /></div>
          </Cell>
          <Cell cls="w-[103px] ml-[2px] pl-[6px]">
            <S w={14} h={14}><path d="M1 0v13h13M1 8h5v5" stroke="#2c8cff" strokeWidth="1.2" /></S>
            <div className="ml-[9px]"><S w={16} h={16}><circle cx="7" cy="8" r="6" stroke="#bbb" /><path d="M7 8h9M7 8l3-6" stroke="#bbb" /></S></div>
            <div className="ml-[5px]"><Caret w={7} /></div>
            <div className="ml-[7px]"><S w={18} h={18}><path d="M9 0v18M2 1l14 16" stroke="#999" /></S></div>
            <div className="ml-[4px]"><Caret w={7} /></div>
          </Cell>
          <Cell cls="w-[64px] pl-[4px]">
            <S w={18} h={16}><path d="M1 15h16M1 15L14 3" stroke="#2c8cff" strokeWidth="1.2" /><circle cx="7" cy="10" r="1" fill="#2c8cff" /></S>
            <div className="ml-[7px] relative"><S w={16} h={16}><rect x="1" y="2" width="14" height="13" stroke="#2c8cff" strokeWidth="1.2" /><rect x="0" y="0" width="5" height="5" fill="#111" /><rect x="1" y="1" width="3" height="3" fill="#12d812" /></S></div>
            <div className="ml-[5px]"><Caret w={7} /></div>
          </Cell>
          <Cell cls="w-[106px] ml-px pl-[4px]">
            <S w={18} h={18}><path d="M9 5L1 17h3l5-6 5 6h3z" fill="#2c8cff" /><circle cx="12" cy="4" r="2.5" stroke="#2c8cff" /></S>
            <div className="ml-[5px]"><S w={18} h={18}><path d="M8 5L1 17h3l4-6 5 6h3z" fill="#b8b8b8" /><path d="M13 1l-2 4h2l-1 3 3-5h-2z" fill="#ddd" /></S></div>
            <div className="ml-[5px]"><S w={18} h={18}><path d="M9 1L7 8 1 17l8-5 8 5-6-9z" fill="#b8b8b8" /></S></div>
            <span className="ml-[8px] text-[11px] text-[#e8e8e8] font-bold">1:1</span>
            <div className="ml-[2px]"><Caret w={7} /></div>
          </Cell>
          <Cell cls="w-[41px] ml-[2px] pl-[6px]">
            <S w={14} h={14}><circle cx="7" cy="7" r="4.5" stroke="#b5b5b5" strokeWidth="3" /><circle cx="7" cy="7" r="6" stroke="#b5b5b5" strokeWidth="1.5" strokeDasharray="2 2" /></S>
            <div className="ml-[7px]"><Caret w={7} /></div>
          </Cell>
          <Cell cls="w-[25px] justify-center"><S w={14} h={14}><path d="M7 0v14M0 7h14" stroke="#ccc" strokeWidth="1.4" /></S></Cell>
          <Cell cls="w-[25px] ml-[2px] justify-center"><S w={16} h={16}><rect x=".5" y=".5" width="7" height="7" stroke="#ccc" /><circle cx="12" cy="7" r="3" stroke="#ccc" /><path d="M6 9l3 6H2z" stroke="#ccc" /></S></Cell>
          <Cell cls="w-[25px] ml-[2px] justify-center"><S w={18} h={18}><circle cx="9" cy="9" r="8" fill="#0b62b8" stroke="#2c8cff" strokeWidth="1.4" /><path d="M6 12l6-6" stroke="#a5cdf5" /></S></Cell>
          <Cell cls="w-[25px] ml-[3px] justify-center"><S w={16} h={13}><rect x=".5" y=".5" width="15" height="12" stroke="#ccc" /><path d="M4 10l3-3M10 6l3-3M4 7v3h3M10 3h3v3" stroke="#ccc" /></S></Cell>
          <Cell cls="w-[22px] justify-center"><S w={16} h={13}><path d="M0 1.5h16M0 6.5h16M0 11.5h16" stroke="#ccc" strokeWidth="2" /></S></Cell>
        </div>
      </div>

      {/* Command line */}
      <div className="absolute left-[742px] top-[984px] w-[435px] h-[27px] flex rounded-[2px] border border-[#5a5f65] bg-[#bbbcbe] z-10">
        <div className="w-[53px] flex items-center bg-[linear-gradient(#5f5f5f,#3f3f3f)]">
          <div className="ml-[3px] w-[5px] h-[16px] bg-[repeating-linear-gradient(#8a8a8a_0_1px,transparent_1px_3px)]" />
          <span className="ml-[7px]"><S w={9} h={9}><path d="M1 1l7 7M8 1L1 8" stroke="#ddd" strokeWidth="1.6" /></S></span>
          <span className="ml-[7px]"><S w={15} h={15}><path d="M1 3l3-2 2 1-1 3 8 8-2 2-8-8-3 1-1-2z" fill="#ddd" /></S></span>
        </div>
        <div className="flex-1 flex items-center relative pl-[5px]">
          <div className="w-[14px] h-[12px] border border-[#6e7680] bg-[#a8b0b8] flex items-center justify-center text-[9px] leading-none text-[#333] font-['Liberation_Mono',monospace]">&gt;_</div>
          <div className="ml-[4px]"><Caret w={5} c="#666" /></div>
          <span className="ml-[7px] text-[13px] italic text-[#808080]">键入命令</span>
          <div className="absolute right-[5px] top-[10px]"><Caret up w={7} c="#111" /></div>
        </div>
      </div>

      {/* Annotations */}
      <div className="absolute left-[4px] top-[46px] w-[1526px] h-[102px] border-2 border-[#ed1c24] pointer-events-none z-10" />
      <div className="absolute left-[1546px] top-[67px] text-[18px] leading-[24px] font-bold text-[#ebebeb] z-10">可视化命令区</div>
      <div className="absolute left-[841px] top-[923px] text-[18px] leading-[24px] font-bold text-white z-10 whitespace-nowrap">命令行区/提示接下来的操作区</div>
      <div className="absolute left-[710px] top-[962px] w-[506px] h-[62px] border-2 border-white pointer-events-none z-10" />
      <div className="absolute left-[1493px] top-[952px] text-[18px] leading-[24px] font-bold text-white z-10 whitespace-nowrap">捕捉相关设置区</div>
      <div className="absolute left-[1353px] top-[988px] w-[563px] h-[49px] border-2 border-white pointer-events-none z-10" />
    </div>
  );
}
